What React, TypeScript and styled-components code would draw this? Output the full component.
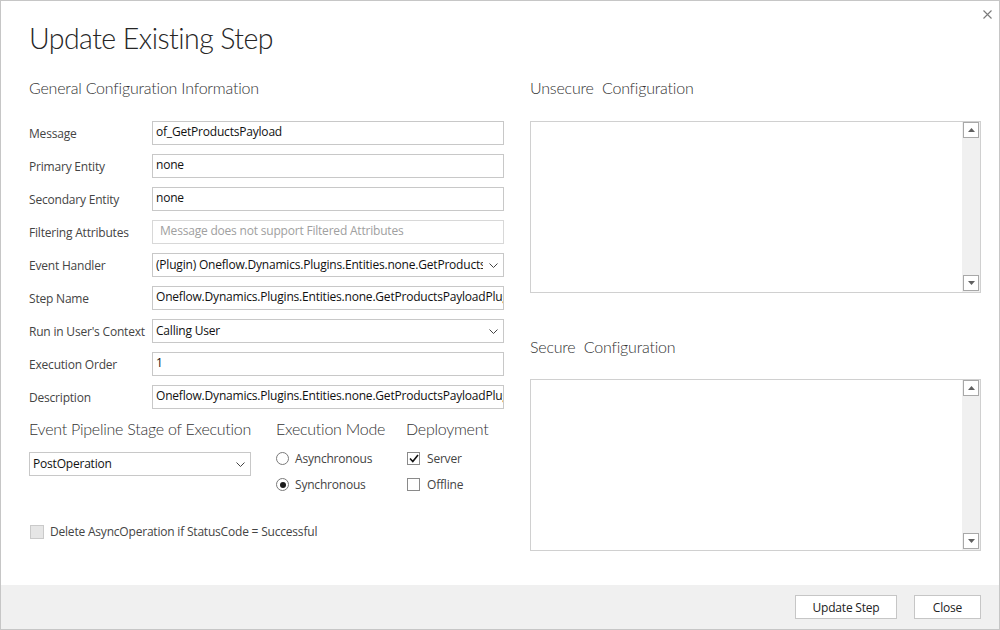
import React from "react";
import styled, { createGlobalStyle } from "styled-components";

const Global = createGlobalStyle`
  html, body { margin: 0; padding: 0; background: #fff; }
  body { font-family: "Segoe UI", "Open Sans", "Liberation Sans", sans-serif; }
  * { box-sizing: border-box; }
`;

const headingFont = `"Segoe UI Light", "Lato", "Open Sans", sans-serif`;

const Dialog = styled.div`
  position: relative;
  width: 1000px;
  height: 630px;
  border: 1px solid #c6c6c6;
  display: flex;
  flex-direction: column;
  background: #fff;
  color: #444;
`;

const CloseButton = styled.button`
  position: absolute;
  top: 5px;
  right: 4px;
  width: 16px;
  height: 16px;
  padding: 0;
  border: none;
  background: transparent;
  display: flex;
  align-items: center;
  justify-content: center;
  cursor: pointer;
`;

const Body = styled.div`
  flex: 1;
  padding: 17px 18px 0 28px;
  display: flex;
  flex-direction: column;
`;

const Title = styled.h1`
  margin: 0;
  font-family: ${headingFont};
  font-size: 28.5px;
  line-height: 40px;
  font-weight: 300;
  color: #262626;
  letter-spacing: -0.55px;
`;

const Columns = styled.div`
  display: flex;
  gap: 26px;
  margin-top: 20px;
`;

const LeftColumn = styled.div`
  width: 475px;
  display: flex;
  flex-direction: column;
`;

const RightColumn = styled.div`
  width: 451px;
  display: flex;
  flex-direction: column;
`;

const SectionTitle = styled.h2<{ $top?: number }>`
  margin: ${(p) => p.$top ?? 0}px 0 0 0;
  font-family: ${headingFont};
  font-size: 16px;
  line-height: 20px;
  font-weight: 300;
  color: #333;
  white-space: pre;
  letter-spacing: -0.2px;
`;

const FieldList = styled.div`
  margin-top: 23px;
  display: flex;
  flex-direction: column;
  gap: 9px;
`;

const FieldRow = styled.div`
  display: grid;
  grid-template-columns: 123px 352px;
  align-items: center;
  height: 24px;
`;

const Label = styled.div`
  font-size: 12px;
  color: #444;
  padding-top: 1px;
  white-space: nowrap;
  letter-spacing: -0.2px;
`;

const Field = styled.div<{ $placeholder?: boolean }>`
  height: 24px;
  border: 1px solid ${(p) => (p.$placeholder ? "#d8d8d8" : "#c8c8c8")};
  background: #fff;
  font-size: 12px;
  line-height: 20px;
  padding: 0 ${(p) => (p.$placeholder ? "7px" : "3px")};
  color: ${(p) => (p.$placeholder ? "#a0a0a0" : "#111")};
  white-space: nowrap;
  overflow: hidden;
  letter-spacing: -0.2px;
`;

const SelectBox = styled.div<{ $width?: number }>`
  height: 24px;
  width: ${(p) => (p.$width ? `${p.$width}px` : "auto")};
  border: 1px solid #c8c8c8;
  background: #fff;
  display: flex;
  align-items: center;
  padding: 0 5px 0 3px;
  gap: 6px;
`;

const SelectText = styled.span`
  flex: 1;
  min-width: 0;
  overflow: hidden;
  white-space: nowrap;
  font-size: 12px;
  line-height: 20px;
  color: #111;
  letter-spacing: -0.2px;
`;

const StageSection = styled.div`
  margin-top: 10px;
  display: grid;
  grid-template-columns: 247px 130px 1fr;
`;

const Group = styled.div`
  display: flex;
  flex-direction: column;
`;

const GroupTitle = styled.div`
  font-family: ${headingFont};
  font-size: 16px;
  line-height: 20px;
  font-weight: 300;
  color: #333;
  white-space: nowrap;
  letter-spacing: -0.25px;
`;

const GroupBody = styled.div`
  margin-top: 13px;
  display: flex;
  flex-direction: column;
  gap: 13px;
`;

const OptionRow = styled.div`
  display: flex;
  align-items: center;
  height: 13px;
  gap: 6px;
  font-size: 12px;
  color: #444;
  white-space: nowrap;
  letter-spacing: -0.2px;
`;

const Radio = styled.span<{ $checked?: boolean }>`
  width: 13px;
  height: 13px;
  border-radius: 50%;
  border: 1px solid #7a7a7a;
  display: flex;
  align-items: center;
  justify-content: center;
  flex: none;
  &::after {
    content: "";
    width: 6px;
    height: 6px;
    border-radius: 50%;
    background: ${(p) => (p.$checked ? "#1a1a1a" : "transparent")};
  }
`;

const Check = styled.span`
  width: 13px;
  height: 13px;
  margin-left: 1px;
  margin-right: 1px;
  border: 1px solid #8a8a8a;
  background: #fff;
  display: flex;
  align-items: center;
  justify-content: center;
  flex: none;
`;

const DeleteRow = styled.div`
  margin-top: 32px;
  margin-left: 1px;
  display: flex;
  align-items: center;
  gap: 6px;
  font-size: 12px;
  color: #444;
  letter-spacing: -0.2px;
`;

const DisabledCheck = styled.span`
  width: 14px;
  height: 14px;
  border: 1px solid #cacaca;
  background: #e6e6e6;
  flex: none;
`;

const TextAreaBox = styled.div<{ $top: number }>`
  margin-top: ${(p) => p.$top}px;
  height: 172px;
  border: 1px solid #d0d0d0;
  display: flex;
  background: #fff;
`;

const TextContent = styled.div`
  flex: 1;
`;

const ScrollTrack = styled.div`
  width: 18px;
  background: #f0f0f0;
  display: flex;
  flex-direction: column;
  justify-content: space-between;
  padding: 0 1px 1px 1px;
`;

const ScrollButton = styled.div`
  width: 16px;
  height: 16px;
  border: 1px solid #a8a8a8;
  background: #fff;
  display: flex;
  align-items: center;
  justify-content: center;
`;

const Footer = styled.div`
  height: 44px;
  background: #f0f0f0;
  display: flex;
  justify-content: flex-end;
  align-items: center;
  gap: 17px;
  padding-right: 18px;
`;

const FooterButton = styled.button<{ $width: number }>`
  width: ${(p) => p.$width}px;
  height: 24px;
  border: 1px solid #c6c6c6;
  background: #fff;
  font-family: inherit;
  font-size: 12px;
  color: #222;
  padding: 0;
  letter-spacing: -0.2px;
  cursor: pointer;
`;

const ChevronIcon = () => (
  <svg width="9" height="5" viewBox="0 0 9 5" style={{ flex: "none" }}>
    <path d="M0.5 0.5 L4.5 4.5 L8.5 0.5" fill="none" stroke="#444" strokeWidth="1" />
  </svg>
);

const ScrollBar = () => (
  <ScrollTrack>
    <ScrollButton>
      <svg width="7" height="4" viewBox="0 0 7 4">
        <path d="M0 4 L3.5 0 L7 4 Z" fill="#606060" />
      </svg>
    </ScrollButton>
    <ScrollButton>
      <svg width="7" height="4" viewBox="0 0 7 4">
        <path d="M0 0 L3.5 4 L7 0 Z" fill="#606060" />
      </svg>
    </ScrollButton>
  </ScrollTrack>
);

type Row = { label: string; value: string; kind?: "select" | "placeholder" };

const rows: Row[] = [
  { label: "Message", value: "of_GetProductsPayload" },
  { label: "Primary Entity", value: "none" },
  { label: "Secondary Entity", value: "none" },
  { label: "Filtering Attributes", value: "Message does not support Filtered Attributes", kind: "placeholder" },
  { label: "Event Handler", value: "(Plugin) Oneflow.Dynamics.Plugins.Entities.none.GetProductsPayloadPlugin", kind: "select" },
  { label: "Step Name", value: "Oneflow.Dynamics.Plugins.Entities.none.GetProductsPayloadPlugin: of_GetProductsPayload of none" },
  { label: "Run in User's Context", value: "Calling User", kind: "select" },
  { label: "Execution Order", value: "1" },
  { label: "Description", value: "Oneflow.Dynamics.Plugins.Entities.none.GetProductsPayloadPlugin: of_GetProductsPayload of none" },
];

export default function App() {
  return (
    <>
      <Global />
      <Dialog>
        <CloseButton aria-label="Close">
          <svg width="9" height="9" viewBox="0 0 9 9">
            <path d="M0.5 0.5 L8.5 8.5 M8.5 0.5 L0.5 8.5" stroke="#7a7a7a" strokeWidth="1.1" />
          </svg>
        </CloseButton>
        <Body>
          <Title>Update Existing Step</Title>
          <Columns>
            <LeftColumn>
              <SectionTitle>General Configuration Information</SectionTitle>
              <FieldList>
                {rows.map((r) => (
                  <FieldRow key={r.label}>
                    <Label>{r.label}</Label>
                    {r.kind === "select" ? (
                      <SelectBox>
                        <SelectText>{r.value}</SelectText>
                        <ChevronIcon />
                      </SelectBox>
                    ) : (
                      <Field $placeholder={r.kind === "placeholder"}>{r.value}</Field>
                    )}
                  </FieldRow>
                ))}
              </FieldList>
              <StageSection>
                <Group>
                  <GroupTitle>Event Pipeline Stage of Execution</GroupTitle>
                  <GroupBody>
                    <SelectBox $width={222}>
                      <SelectText>PostOperation</SelectText>
                      <ChevronIcon />
                    </SelectBox>
                  </GroupBody>
                </Group>
                <Group>
                  <GroupTitle>Execution Mode</GroupTitle>
                  <GroupBody>
                    <OptionRow>
                      <Radio />
                      Asynchronous
                    </OptionRow>
                    <OptionRow>
                      <Radio $checked />
                      Synchronous
                    </OptionRow>
                  </GroupBody>
                </Group>
                <Group>
                  <GroupTitle>Deployment</GroupTitle>
                  <GroupBody>
                    <OptionRow>
                      <Check>
                        <svg width="10" height="9" viewBox="0 0 10 9">
                          <path d="M1 4.5 L3.8 7.5 L9 1" fill="none" stroke="#111" strokeWidth="1.6" />
                        </svg>
                      </Check>
                      Server
                    </OptionRow>
                    <OptionRow>
                      <Check />
                      Offline
                    </OptionRow>
                  </GroupBody>
                </Group>
              </StageSection>
              <DeleteRow>
                <DisabledCheck />
                Delete AsyncOperation if StatusCode = Successful
              </DeleteRow>
            </LeftColumn>
            <RightColumn>
              <SectionTitle>{"Unsecure  Configuration"}</SectionTitle>
              <TextAreaBox $top={23}>
                <TextContent />
                <ScrollBar />
              </TextAreaBox>
              <SectionTitle $top={44}>{"Secure  Configuration"}</SectionTitle>
              <TextAreaBox $top={22}>
                <TextContent />
                <ScrollBar />
              </TextAreaBox>
            </RightColumn>
          </Columns>
        </Body>
        <Footer>
          <FooterButton $width={102}>Update Step</FooterButton>
          <FooterButton $width={67}>Close</FooterButton>
        </Footer>
      </Dialog>
    </>
  );
}
